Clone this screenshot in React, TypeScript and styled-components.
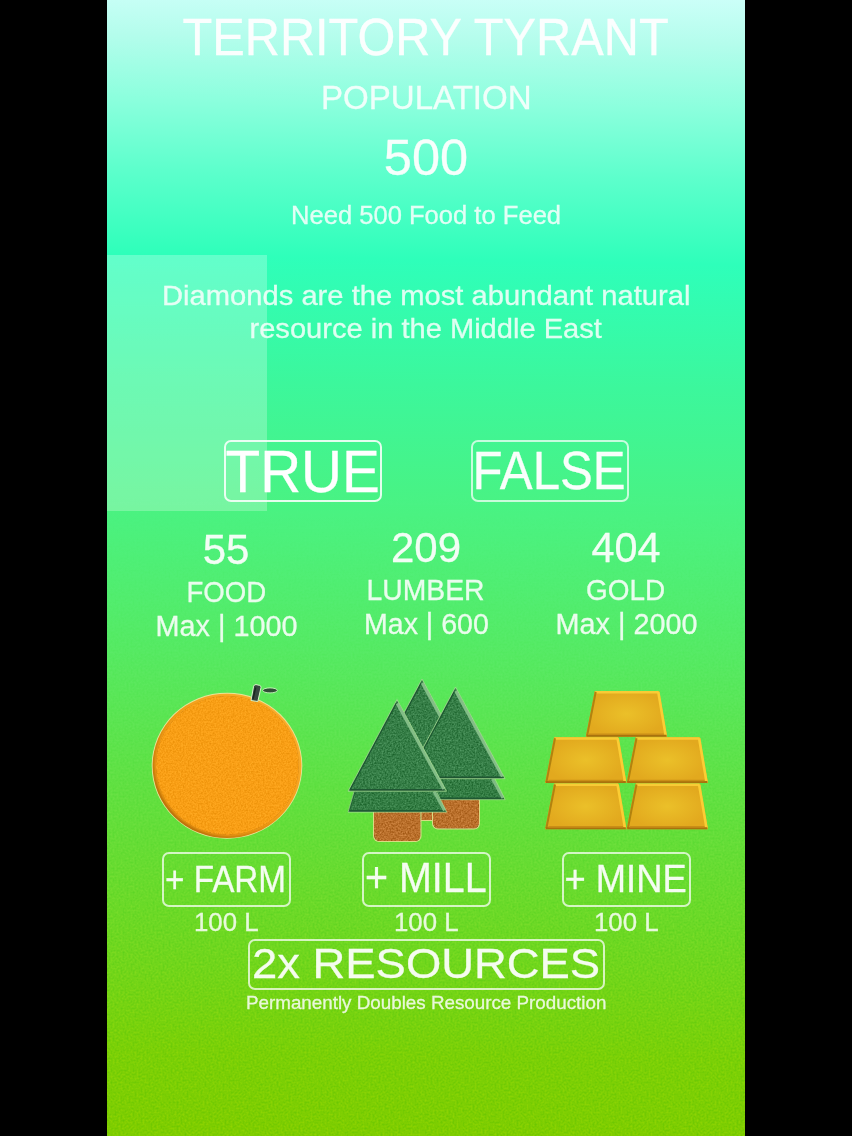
import React, { useLayoutEffect, useRef, useState } from "react";
import styled, { createGlobalStyle } from "styled-components";

const GlobalStyle = createGlobalStyle`
  html, body { margin: 0; padding: 0; background: #000; }
  body { font-family: "Liberation Sans", Arial, Helvetica, sans-serif; }
`;

const Stage = styled.div`
  display: flex;
  justify-content: center;
  height: 1136px;
  background: #000;
`;

const Screen = styled.main`
  position: relative;
  isolation: isolate;
  display: flex;
  flex-direction: column;
  align-items: center;
  box-sizing: border-box;
  width: 638px;
  height: 1136px;
  overflow: hidden;
  background: linear-gradient(
    181deg,
    #cbfff8 0,
    #b4fdec 45px,
    #8bffdd 110px,
    #5dffcc 180px,
    #2effba 265px,
    #3cf79c 390px,
    #4af281 520px,
    #55ea62 660px,
    #60e040 800px,
    #6cd822 940px,
    #79d006 1060px,
    #7dcd00 1136px
  );
`;

const Grain = styled.svg`
  position: absolute;
  inset: 0;
  z-index: -1;
  opacity: 0.15;
  mix-blend-mode: overlay;
  mask-image: linear-gradient(180deg, transparent 480px, #000 950px);
`;

const Highlight = styled.div`
  position: absolute;
  z-index: -1;
  left: 0;
  top: 255px;
  width: 160px;
  height: 255.5px;
  background: rgba(255, 255, 255, 0.25);
`;

const Line = styled.div<{ $size: number; $height: number; $alpha?: number }>`
  display: flex;
  justify-content: center;
  align-items: center;
  height: ${(p) => p.$height}px;
  line-height: ${(p) => p.$height}px;
  font-size: ${(p) => p.$size}px;
  color: rgb(255, 255, 255);
  opacity: ${(p) => p.$alpha ?? 0.93};
  -webkit-text-stroke: 0.3px #fff;
  white-space: nowrap;
`;

const Glyphs = styled.span`
  flex: none;
  display: block;
  transform-origin: center;
`;

type LabelProps = {
  width: number;
  size: number;
  height: number;
  alpha?: number;
  children: string;
};

/* A single line of text stretched or condensed to an exact width. */
function Label({ width, size, height, alpha, children }: LabelProps) {
  const ref = useRef<HTMLSpanElement>(null);
  const [scale, setScale] = useState(1);
  useLayoutEffect(() => {
    if (ref.current) setScale(width / ref.current.offsetWidth);
  }, [width, size, children]);
  return (
    <Line $size={size} $height={height} $alpha={alpha}>
      <Glyphs ref={ref} style={{ transform: `scaleX(${scale})` }}>
        {children}
      </Glyphs>
    </Line>
  );
}

const Header = styled.header`
  display: flex;
  flex-direction: column;
  align-items: center;
  height: 278px;
  padding-top: 7px;
  box-sizing: border-box;
`;

const Spacer = styled.div<{ $h: number }>`
  flex: none;
  height: ${(p) => p.$h}px;
`;

const Question = styled.section`
  height: 162px;
`;

const Answers = styled.div`
  display: flex;
  gap: 89px;
  height: 62px;
`;

const OutlineButton = styled.button<{ $w: number; $h: number; $alpha?: number }>`
  display: flex;
  justify-content: center;
  align-items: flex-start;
  box-sizing: border-box;
  width: ${(p) => p.$w}px;
  height: ${(p) => p.$h}px;
  padding: 0;
  border: 2px solid rgba(255, 255, 255, ${(p) => p.$alpha ?? 0.72});
  border-radius: 7px;
  background: none;
  font-family: inherit;
`;

const Resources = styled.section`
  display: grid;
  grid-template-columns: repeat(3, 200px);
  height: 437px;
`;

const Resource = styled.article`
  display: flex;
  flex-direction: column;
  align-items: center;
`;

const Stats = styled.div<{ $drop: number }>`
  box-sizing: border-box;
  height: 168px;
  padding-top: ${(p) => p.$drop}px;
`;

const Art = styled.svg`
  flex: none;
  display: block;
  width: 200px;
  height: 182px;
`;

const Upgrade = styled.section`
  display: flex;
  flex-direction: column;
  align-items: center;
  padding-left: 1px;
`;

function Defs() {
  return (
    <Grain width="638" height="1136">
      <defs>
        <filter id="grain" x="0" y="0" width="100%" height="100%" colorInterpolationFilters="sRGB">
          <feTurbulence type="fractalNoise" baseFrequency="0.5" numOctaves="2" seed="4" />
          <feColorMatrix values="1.4 0 0 0 -0.18  1.4 0 0 0 -0.18  1.4 0 0 0 -0.18  0 0 0 0 1" />
        </filter>
        <filter id="speckle" x="-5%" y="-5%" width="110%" height="110%" colorInterpolationFilters="sRGB">
          <feTurbulence type="fractalNoise" baseFrequency="0.6" numOctaves="2" seed="9" result="n" />
          <feColorMatrix in="n" values="0.8 0 0 0 0.1  0.8 0 0 0 0.1  0.8 0 0 0 0.1  0 0 0 0 1" result="g" />
          <feComposite in="SourceGraphic" in2="g" operator="arithmetic" k2="1" k3="0.4" k4="-0.21" result="m" />
          <feComposite in="m" in2="SourceGraphic" operator="in" />
        </filter>
        <filter id="soft" x="-10%" y="-10%" width="120%" height="120%">
          <feGaussianBlur stdDeviation="1.1" />
        </filter>
        <radialGradient id="gold">
          <stop offset="0" stopColor="#ebc029" />
          <stop offset="1" stopColor="#e2a91e" />
        </radialGradient>
        <linearGradient id="rim" x1="1" y1="0" x2="0" y2="1">
          <stop offset="0" stopColor="#ffbb45" />
          <stop offset="0.5" stopColor="#f09a16" />
          <stop offset="1" stopColor="#a45f04" />
        </linearGradient>
      </defs>
      <rect width="638" height="1136" filter="url(#grain)" />
    </Grain>
  );
}

function OrangeArt() {
  return (
    <Art viewBox="126 670 200 182">
      <ellipse cx="227" cy="765.7" rx="75.3" ry="73" fill="#e9e59a" />
      <ellipse cx="227" cy="765.9" rx="74.4" ry="72.2" fill="url(#rim)" />
      <ellipse cx="227.4" cy="765.4" rx="72.2" ry="70" fill="#fba117" filter="url(#soft)" />
      <ellipse cx="227.4" cy="765.4" rx="71.5" ry="69.5" fill="#f99f18" filter="url(#speckle)" opacity="0.5" />
      <path d="M251 700.5 L253.6 686.2 Q254.2 684.4 256 684.6 L259.8 685.4 Q261.2 686 261 687.6 L257.8 701.5 Z" fill="#37473f" stroke="#d7f5c8" strokeWidth="1" />
      <path d="M253 699 L255.6 687.5" stroke="#1b2722" strokeWidth="1.5" />
      <ellipse cx="270" cy="690.4" rx="7.3" ry="2.5" fill="#2f4d35" stroke="#c9f5bd" strokeWidth="0.9" />
    </Art>
  );
}

/* The origin is the apex of the upper triangle. */
function Tree({ x, y }: { x: number; y: number }) {
  return (
    <g transform={`translate(${x} ${y})`}>
      <path d="M-42 89 L-49 112.5 H49.5 L36 89 Z" fill="#367f46" filter="url(#speckle)" />
      <path d="M-42 91 L-48 112 " stroke="#1f6034" strokeWidth="1.6" />
      <path d="M-47 111.5 H48" stroke="#1f5933" strokeWidth="2.2" />
      <path d="M37 92 L47.5 111" stroke="#7fba84" strokeWidth="3" />
      <path d="M-42 89 L-49 112.7 H49.7 L38 89" fill="none" stroke="#a9e095" strokeWidth="0.7" />
      <path d="M0 0 L-49 91.5 H49.5 Z" fill="#388049" filter="url(#speckle)" />
      <path d="M-0.8 3.5 L-47 90" stroke="#1c5831" strokeWidth="1.6" />
      <path d="M-47 90.6 H47" stroke="#1f5532" strokeWidth="2.2" />
      <path d="M0.2 4 L46.8 89.6" stroke="#83bd87" strokeWidth="3" />
      <path d="M0 0 L-49 91.7 H49.5 Z" fill="none" stroke="#a9e095" strokeWidth="0.8" />
    </g>
  );
}

function Trunk({ x, y, w, h }: { x: number; y: number; w: number; h: number }) {
  return (
    <g>
      <rect x={x} y={y} width={w} height={h} rx="6" fill="#d8dc83" />
      <rect x={x + 1} y={y + 1} width={w - 2} height={h - 2} rx="5.2" fill="#bc722e" filter="url(#speckle)" />
    </g>
  );
}

function TreesArt() {
  return (
    <Art viewBox="326 670 200 182">
      <Trunk x={400} y={792} w={44} h={29} />
      <Tree x={422} y={679} />
      <Trunk x={432} y={794} w={48} h={35.5} />
      <Tree x={455.5} y={687} />
      <Trunk x={373} y={806} w={48.5} h={36} />
      <Tree x={397} y={699.5} />
    </Art>
  );
}

function Ingot({ x, y }: { x: number; y: number }) {
  return (
    <g transform={`translate(${x} ${y})`}>
      <path d="M9 0 H73.5 L81.5 45.8 H0 Z" fill="url(#gold)" />
      <path d="M9.6 1.2 H73" stroke="#f8cb35" strokeWidth="2.4" />
      <path d="M72.6 1 L80 44.6" stroke="#fbcd34" strokeWidth="2.6" />
      <path d="M10 1 L1.4 44.8" stroke="#b1820f" strokeWidth="2" />
      <path d="M0.8 44.8 H80.8" stroke="#a8720d" strokeWidth="2" />
      <path d="M3.4 43.2 H78" stroke="#c98e16" strokeWidth="1.4" />
    </g>
  );
}

function GoldArt() {
  return (
    <Art viewBox="526 670 200 182">
      <Ingot x={545} y={783.5} />
      <Ingot x={626.5} y={783.5} />
      <Ingot x={545} y={737.3} />
      <Ingot x={626.5} y={737.3} />
      <Ingot x={585.7} y={691} />
    </Art>
  );
}

export default function App() {
  return (
    <>
      <GlobalStyle />
      <Stage>
        <Screen>
          <Defs />
          <Highlight />
          <Header>
            <Label width={486} size={52} height={61} alpha={0.95}>TERRITORY TYRANT</Label>
            <Spacer $h={9} />
            <Label width={211} size={34} height={40} alpha={0.86}>POPULATION</Label>
            <Spacer $h={12} />
            <Label width={84} size={50.5} height={57} alpha={0.95}>500</Label>
            <Spacer $h={14} />
            <Label width={270} size={25} height={31} alpha={0.84}>Need 500 Food to Feed</Label>
          </Header>
          <Question>
            <Label width={528} size={28.5} height={34} alpha={0.84}>Diamonds are the most abundant natural</Label>
            <Label width={352} size={28.5} height={33} alpha={0.84}>resource in the Middle East</Label>
          </Question>
          <Answers>
            <OutlineButton $w={158} $h={62} $alpha={0.85}>
              <Label width={154} size={60} height={59} alpha={1}>TRUE</Label>
            </OutlineButton>
            <OutlineButton $w={158} $h={62} $alpha={0.7}>
              <Label width={153} size={54} height={57} alpha={0.97}>FALSE</Label>
            </OutlineButton>
          </Answers>
          <Resources>
            <Resource>
              <Stats $drop={26}>
                <Label width={47} size={42} height={44}>55</Label>
                <Label width={80} size={30} height={40} alpha={0.88}>FOOD</Label>
                <Label width={142} size={29} height={28} alpha={0.88}>Max | 1000</Label>
              </Stats>
              <OrangeArt />
              <OutlineButton $w={129} $h={55}>
                <Label width={121} size={36} height={52}>+ FARM</Label>
              </OutlineButton>
              <Label width={65} size={25} height={30} alpha={0.84}>100 L</Label>
            </Resource>
            <Resource>
              <Stats $drop={24}>
                <Label width={70} size={42} height={44}>209</Label>
                <Label width={118} size={30} height={40} alpha={0.88}>LUMBER</Label>
                <Label width={125} size={29} height={29} alpha={0.88}>Max | 600</Label>
              </Stats>
              <TreesArt />
              <OutlineButton $w={129} $h={55}>
                <Label width={122} size={42} height={48}>+ MILL</Label>
              </OutlineButton>
              <Label width={65} size={25} height={30} alpha={0.84}>100 L</Label>
            </Resource>
            <Resource>
              <Stats $drop={24}>
                <Label width={69} size={42} height={44}>404</Label>
                <Label width={79} size={30} height={40} alpha={0.88}>GOLD</Label>
                <Label width={142} size={29} height={29} alpha={0.88}>Max | 2000</Label>
              </Stats>
              <GoldArt />
              <OutlineButton $w={129} $h={55}>
                <Label width={122} size={39} height={49}>+ MINE</Label>
              </OutlineButton>
              <Label width={65} size={25} height={30} alpha={0.84}>100 L</Label>
            </Resource>
          </Resources>
          <Upgrade>
            <OutlineButton $w={357} $h={51}>
              <Label width={348} size={42} height={46}>2x RESOURCES</Label>
            </OutlineButton>
            <Label width={360} size={19} height={25} alpha={0.84}>Permanently Doubles Resource Production</Label>
          </Upgrade>
        </Screen>
      </Stage>
    </>
  );
}
